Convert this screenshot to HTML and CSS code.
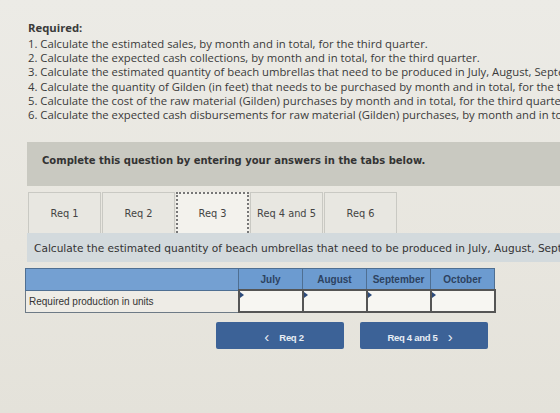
FILE: index.html
```html
<!DOCTYPE html>
<html lang="en">
<head>
    <meta charset="UTF-8">
    <title>Required | Budgeting Problem</title>
    <link rel="stylesheet" href="styles.css">
</head>
<body>
    <div class="page">
        <div class="required">
            <div class="required-title">Required:</div>
            <ol class="required-list">
                <li>1. Calculate the estimated sales, by month and in total, for the third quarter.</li>
                <li>2. Calculate the expected cash collections, by month and in total, for the third quarter.</li>
                <li>3. Calculate the estimated quantity of beach umbrellas that need to be produced in July, August, September, and October.</li>
                <li>4. Calculate the quantity of Gilden (in feet) that needs to be purchased by month and in total, for the third quarter.</li>
                <li>5. Calculate the cost of the raw material (Gilden) purchases by month and in total, for the third quarter.</li>
                <li>6. Calculate the expected cash disbursements for raw material (Gilden) purchases, by month and in total, for the third quarter.</li>
            </ol>
        </div>

        <div class="banner">Complete this question by entering your answers in the tabs below.</div>

        <div class="tabs">
            <button class="tab">Req 1</button>
            <button class="tab">Req 2</button>
            <button class="tab tab-active">Req 3</button>
            <button class="tab">Req 4 and 5</button>
            <button class="tab">Req 6</button>
        </div>

        <div class="instruction">Calculate the estimated quantity of beach umbrellas that need to be produced in July, August, September, and October.</div>

        <table class="answer-table">
            <thead>
                <tr>
                    <th class="label-col"></th>
                    <th>July</th>
                    <th>August</th>
                    <th>September</th>
                    <th>October</th>
                </tr>
            </thead>
            <tbody>
                <tr>
                    <td class="row-label">Required production in units</td>
                    <td class="input-cell"><input type="text"></td>
                    <td class="input-cell"><input type="text"></td>
                    <td class="input-cell"><input type="text"></td>
                    <td class="input-cell"><input type="text"></td>
                </tr>
            </tbody>
        </table>

        <div class="nav-btns">
            <button class="nav-btn"><span class="chev">&lsaquo;</span> Req 2</button>
            <button class="nav-btn">Req 4 and 5 <span class="chev">&rsaquo;</span></button>
        </div>
    </div>
</body>
</html>
```

FILE: styles.css
```css
body {
    margin: 0;
    height: 413px;
    overflow: hidden;
    background: linear-gradient(180deg, #ecebe6 0%, #e8e6df 60%, #e4e2da 100%);
    font-family: 'Liberation Sans', Arial, sans-serif;
    color: #333;
}
.page {
    padding: 19px 0 0 28px;
    width: 640px;
}
.required {
    font-family: 'Open Sans', Lato, sans-serif;
    font-size: 11.3px;
    color: #3a3a3a;
    white-space: nowrap;
}
.required-title {
    font-weight: 700;
    line-height: 17px;
}
.required-list {
    list-style: none;
    margin: 1px 0 0 0;
    padding: 0;
}
.required-list li {
    line-height: 14.2px;
}
.banner {
    margin: 20px 0 0 -1px;
    height: 44px;
    box-sizing: border-box;
    padding: 13px 0 0 15px;
    background: #c9c9c1;
    font-family: 'DejaVu Sans', Verdana, sans-serif;
    font-size: 10px;
    font-weight: 700;
    color: #333;
    white-space: nowrap;
}
.tabs {
    display: flex;
    gap: 1px;
    margin-top: 6px;
    height: 41px;
}
.tab {
    width: 73px;
    height: 41px;
    border: 1px solid #c9c9c3;
    border-bottom: none;
    background: #e8e7e1;
    font-family: 'DejaVu Sans', Verdana, sans-serif;
    font-size: 9.8px;
    color: #444;
    padding: 0;
}
.tab-active {
    background: #f3f2ed;
    border: 2px dotted #777;
    border-bottom: none;
}
.instruction {
    margin-left: -1px;
    height: 29px;
    box-sizing: border-box;
    padding: 9px 0 0 7px;
    background: #d3dadd;
    font-family: 'DejaVu Sans', Verdana, sans-serif;
    font-size: 10.6px;
    color: #333;
    white-space: nowrap;
}
.answer-table {
    margin: 6px 0 0 -3px;
    border-collapse: collapse;
    border: 1px solid #6d7a86;
}
.answer-table th {
    height: 20px;
    width: 63px;
    padding: 0;
    background: #6c9bd0;
    border: 1px solid #4f6f92;
    color: #2c4260;
    font-size: 10px;
    font-weight: 700;
    text-align: center;
}
.answer-table th.label-col {
    width: 212px;
    background: #74a0d2;
}
.answer-table td {
    height: 20px;
    padding: 0;
    border: 1px solid #6d7a86;
}
.row-label {
    background: #eeece6;
    font-size: 10px;
    color: #333;
    padding-left: 3px !important;
}
.input-cell {
    position: relative;
    background: #f7f6f2;
    border: 2px solid #555 !important;
}
.input-cell input {
    width: 100%;
    height: 18px;
    box-sizing: border-box;
    border: none;
    background: transparent;
    padding: 0 3px;
}
/* little marker in the corner of each editable cell */
.input-cell::before {
    content: '';
    position: absolute;
    top: 1px;
    left: 0;
    border-top: 3px solid transparent;
    border-bottom: 3px solid transparent;
    border-left: 4px solid #2c4a7a;
}
.nav-btns {
    display: flex;
    gap: 16px;
    margin: 9px 0 0 188px;
}
.nav-btn {
    width: 128px;
    height: 27px;
    border: none;
    border-radius: 2px;
    background: #3c6297;
    color: #e8edf4;
    font-family: 'Liberation Sans', Arial, sans-serif;
    font-size: 9.5px;
    font-weight: 700;
    letter-spacing: -0.3px;
    padding: 0;
}
.chev {
    font-size: 15px;
    font-weight: 400;
    margin: 0 8px;
    position: relative;
    top: 1px;
}
```
